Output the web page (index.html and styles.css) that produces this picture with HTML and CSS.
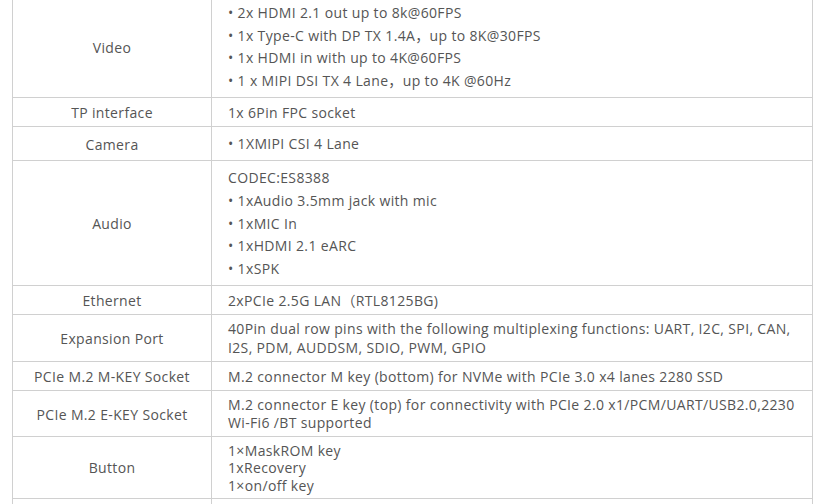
FILE: index.html
```html
<!DOCTYPE html>
<html>
<head>
<meta charset="utf-8">
<link rel="stylesheet" href="styles.css">
</head>
<body>
<table class="spec">
  <colgroup><col class="c1"><col class="c2"></colgroup>
  <tr>
    <td class="k">Video</td>
    <td class="v">
      <ul class="list">
        <li>• 2x HDMI 2.1 out up to 8k@60FPS</li>
        <li>• 1x Type-C with DP TX 1.4A，up to 8K@30FPS</li>
        <li>• 1x HDMI in with up to 4K@60FPS</li>
        <li>• 1 x MIPI DSI TX 4 Lane，up to 4K @60Hz</li>
      </ul>
    </td>
  </tr>
  <tr>
    <td class="k">TP interface</td>
    <td class="v">1x 6Pin FPC socket</td>
  </tr>
  <tr>
    <td class="k">Camera</td>
    <td class="v"><ul class="list"><li>• 1XMIPI CSI 4 Lane</li></ul></td>
  </tr>
  <tr>
    <td class="k">Audio</td>
    <td class="v">
      <div class="lead">CODEC:ES8388</div>
      <ul class="list">
        <li>• 1xAudio 3.5mm jack with mic</li>
        <li>• 1xMIC In</li>
        <li>• 1xHDMI 2.1 eARC</li>
        <li>• 1xSPK</li>
      </ul>
    </td>
  </tr>
  <tr>
    <td class="k">Ethernet</td>
    <td class="v">2xPCIe 2.5G LAN（RTL8125BG)</td>
  </tr>
  <tr>
    <td class="k">Expansion Port</td>
    <td class="v wide">40Pin dual row pins with the following multiplexing functions: UART, I2C, SPI, CAN, I2S, PDM, AUDDSM, SDIO, PWM, GPIO</td>
  </tr>
  <tr>
    <td class="k">PCIe M.2 M-KEY Socket</td>
    <td class="v">M.2 connector M key (bottom) for NVMe with PCIe 3.0 x4 lanes 2280 SSD</td>
  </tr>
  <tr>
    <td class="k">PCIe M.2 E-KEY Socket</td>
    <td class="v tight">M.2 connector E key (top) for connectivity with PCIe 2.0 x1/PCM/UART/USB2.0,2230 Wi-Fi6 /BT supported</td>
  </tr>
  <tr>
    <td class="k">Button</td>
    <td class="v tighter">1×MaskROM key<br>1xRecovery<br>1×on/off key</td>
  </tr>
  <tr>
    <td class="k empty"></td>
    <td class="v empty"></td>
  </tr>
</table>
</body>
</html>
```
FILE: styles.css
```css
html, body {
  margin: 0;
  padding: 0;
  background: #fff;
  overflow: hidden;
}
body {
  font-family: "Open Sans", "Noto Sans CJK SC", sans-serif;
  font-size: 14px;
  letter-spacing: 0.35px;
  color: #555;
}
.spec {
  border-collapse: collapse;
  table-layout: fixed;
  width: 800px;
  margin: -4.5px 0 0 12px;
}
.c1 { width: 199px; }
.c2 { width: 601px; }
.spec td {
  border: 1px solid #d0d0d0;
  padding: 5px 16px 4px;
  line-height: 19px;
  vertical-align: middle;
}
.spec td.k {
  text-align: center;
}
.spec td.v {
  text-align: left;
}
.list {
  list-style: none;
  margin: 0;
  padding: 0.5px 0 1px;
}
.list li {
  line-height: 22.5px;
}
.lead {
  line-height: 23.5px;
}
.spec td.wide {
  line-height: 18.5px;
}
.spec td.tight {
  line-height: 18px;
}
.spec td.tighter {
  line-height: 17.33px;
}
.spec td.empty {
  height: 40px;
}
```
